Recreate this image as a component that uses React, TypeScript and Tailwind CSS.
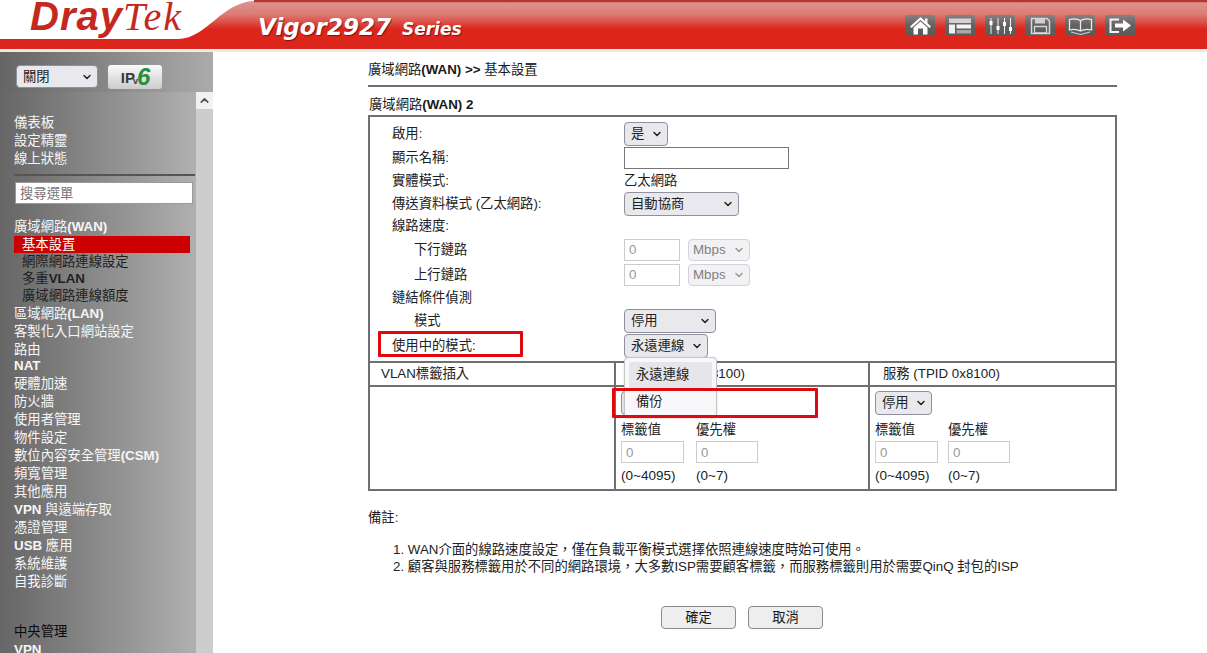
import { ChevronDown, ChevronUp } from 'lucide-react';

const topLinks = ['儀表板', '設定精靈', '線上狀態'];

const wanLinks = ['網際網路連線設定', '多重VLAN', '廣域網路連線額度'];

const menuLinks = [
  '區域網路(LAN)',
  '客製化入口網站設定',
  '路由',
  'NAT',
  '硬體加速',
  '防火牆',
  '使用者管理',
  '物件設定',
  '數位內容安全管理(CSM)',
  '頻寬管理',
  '其他應用',
  'VPN 與遠端存取',
  '憑證管理',
  'USB 應用',
  '系統維護',
  '自我診斷',
];

// the router UI only looks bold on its latin runs, the CJK stays regular
function Mixed({ text }: { text: string }) {
  return (
    <>
      {text.split(/([A-Za-z0-9()>]+)/).map((part, i) =>
        i % 2 === 1 ? (
          <b key={i} className="font-bold">
            {part}
          </b>
        ) : (
          <span key={i}>{part}</span>
        ),
      )}
    </>
  );
}

function Select({ label, box, disabled }: { label: string; box: string; disabled?: boolean }) {
  return (
    <div className={`relative ${box}`}>
      <select
        disabled={disabled}
        className={
          disabled
            ? 'h-full w-full appearance-none rounded-[4px] border border-[#d4d4d8] bg-[#f2f2f4] pl-[4px] text-[#808080]'
            : 'h-full w-full appearance-none rounded-[4px] border border-[#8f8f9d] bg-[#e9e9ed] pl-[6px] text-[#222]'
        }
      >
        <option>{label}</option>
      </select>
      <ChevronDown
        size={12}
        strokeWidth={3}
        className={
          disabled
            ? 'pointer-events-none absolute right-[5px] top-1/2 -translate-y-1/2 text-[#999]'
            : 'pointer-events-none absolute right-[5px] top-1/2 -translate-y-1/2 text-[#222]'
        }
      />
    </div>
  );
}

function Header() {
  return (
    <header className="relative h-[52px] w-full overflow-hidden bg-white">
      <svg className="absolute inset-0 h-full w-full" viewBox="0 0 1207 52" preserveAspectRatio="none">
        <defs>
          <linearGradient id="band" gradientUnits="userSpaceOnUse" x1="0" y1="0" x2="0" y2="52">
            <stop offset="0.04" stopColor="#dd9490" />
            <stop offset="0.27" stopColor="#dc7d76" />
            <stop offset="0.42" stopColor="#dc5047" />
            <stop offset="0.56" stopColor="#dc261c" />
            <stop offset="1" stopColor="#dc261c" />
          </linearGradient>
        </defs>
        <rect x="0" y="49" width="1207" height="3" fill="#ececec" />
        <path d="M0 39 L178 39 C206 39 222 2 254 1 L1207 1 L1207 49 L0 49 Z" fill="url(#band)" />
        <path d="M254 1 L1207 1" stroke="#b8342c" strokeWidth="2.5" fill="none" />
      </svg>
      <div className="relative flex items-start">
        <div className="ml-[30px] mt-[-8px] flex w-[228px] items-baseline text-[40px] leading-[48px] tracking-[1px] text-[#c4281e]">
          <span className="font-bold italic [font-family:'Liberation_Sans',sans-serif]">Dray</span>
          <span className="italic tracking-[2px] [font-family:'Liberation_Serif',serif]">Tek</span>
        </div>
        <div className="mt-[10px] flex items-baseline gap-[11px] font-bold italic text-white [font-family:'DejaVu_Sans',sans-serif] [text-shadow:1px_1px_1px_rgba(0,0,0,0.45)]">
          <span className="text-[23px] leading-[34px]">Vigor2927</span>
          <span className="text-[17px] leading-[34px]">Series</span>
        </div>
        <div className="ml-auto mr-[72px] mt-[15px] flex gap-[10px]">
          <IconButton>
            <path d="M15.5 2 L20 6 V3.5 H22.5 V8.2 L26 11.5 L24.5 13 L15.5 5 L6.5 13 L5 11.5 Z" fill="#fff" />
            <path d="M15.5 6.5 L22.5 12.5 V19.5 H18 V13.5 H13 V19.5 H8.5 V12.5 Z" fill="#fff" />
          </IconButton>
          <IconButton>
            <path d="M4 3.5 H26 V8 H4 Z" fill="#d2d2d2" />
            <path d="M4 9.5 H10 V18.5 H4 Z" fill="#f0f0f0" />
            <path d="M11.5 9.5 H26 V13.5 H11.5 Z" fill="#f4f4f4" />
            <path d="M11.5 15 H26 V18.5 H11.5 Z" fill="#a8a8a8" />
          </IconButton>
          <IconButton>
            <path d="M6 3 V19 M13 3 V19 M19.5 3 V19 M25.5 3 V19" stroke="#f2f2f2" strokeWidth="1" />
            <path d="M4.5 6 H7.5 V10 H4.5 Z M11.5 11 H14.5 V15 H11.5 Z M18 7 H21 V11 H18 Z M24 12 H27 V16 H24 Z" fill="#fff" />
          </IconButton>
          <IconButton>
            <path d="M6.5 3.5 H22 L24.5 6 V18.5 H6.5 Z" fill="none" stroke="#d8d8d8" strokeWidth="1.5" />
            <path d="M10 3.5 H20 V8.5 H10 Z" fill="#cfcfcf" />
            <path d="M9.5 11.5 H21.5 V18 H9.5 Z" fill="none" stroke="#d8d8d8" strokeWidth="1.3" />
          </IconButton>
          <IconButton>
            <path d="M15.5 5.5 C12 3.5 8 3.5 4.5 4.5 V15 C8 14 12 14 15.5 16 C19 14 23 14 26.5 15 V4.5 C23 3.5 19 3.5 15.5 5.5 Z M15.5 5.5 V16" fill="none" stroke="#ececec" strokeWidth="1.3" />
            <path d="M6 17 L15.5 19.5 L25 17" fill="none" stroke="#cfcfcf" strokeWidth="1.2" />
          </IconButton>
          <IconButton>
            <path d="M14 4.5 H5.5 V17 H14" fill="none" stroke="#f4f4f4" strokeWidth="2" />
            <path d="M10 8.5 H18 V4.5 L26 10.5 L18 16.5 V12.5 H10 Z" fill="#fff" />
          </IconButton>
        </div>
      </div>
    </header>
  );
}

function IconButton({ children }: { children: React.ReactNode }) {
  return (
    <div className="h-[21px] w-[30px] rounded-[2px] bg-gradient-to-b from-[#8a7f7f] via-[#626262] to-[#5a5a5a]">
      <svg viewBox="0 0 30 21" className="h-full w-full">
        {children}
      </svg>
    </div>
  );
}

function Sidebar() {
  return (
    <aside className="flex h-[601px] w-[213px] shrink-0 flex-col overflow-hidden text-[13.33px]">
      <div className="flex h-[40px] shrink-0 items-start gap-[10px] bg-gradient-to-r from-[#656565] to-[#ababab] pl-[16px] pt-[13px]">
        <Select label="關閉" box="h-[23px] w-[82px]" />
        <div className="flex h-[24px] w-[54px] items-center justify-center rounded-[3px] bg-gradient-to-b from-[#fafafa] to-[#cccccc] pl-[1px] text-[15px] leading-none text-[#3a3a3a]">
          <span className="font-bold">IP</span>
          <span className="ml-[-2px] mt-[9px] text-[9px] font-bold">v</span>
          <span className="ml-[-1px] mt-[-1px] text-[24px] font-bold italic text-[#23913c]">6</span>
        </div>
      </div>
      <div className="flex min-h-0 flex-1">
        <nav className="w-[196px] shrink-0 bg-gradient-to-r from-[#666666] to-[#b0b0b0] pt-[22px] leading-[18px] text-[#f6f6f6]">
          <div className="pl-[14px]">
            {topLinks.map((link) => (
              <div key={link}>{link}</div>
            ))}
          </div>
          <div className="ml-[14px] mt-[6px] h-[2px] w-[181px] bg-[#555555]" />
          <input
            placeholder="搜尋選單"
            className="ml-[15px] mt-[6px] block h-[22px] w-[178px] border border-[#999] bg-white px-[4px] placeholder:text-[#777]"
          />
          <div className="mt-[14px] pl-[14px]">
            <Mixed text="廣域網路(WAN)" />
          </div>
          <div className="ml-[14px] h-[17px] w-[176px] bg-[#cc0000] pl-[8px] leading-[17px] text-white">基本設置</div>
          <div className="pl-[22px] leading-[17px] text-[#1f1f1f]">
            {wanLinks.map((link) => (
              <div key={link}>
                <Mixed text={link} />
              </div>
            ))}
          </div>
          <div className="mt-[1px] pl-[14px]">
            {menuLinks.map((link) => (
              <div key={link} className={link === 'NAT' ? 'h-[16px] leading-[14px]' : 'h-[18px]'}>
                <Mixed text={link} />
              </div>
            ))}
          </div>
          <div className="mt-[32px] pl-[14px] text-[#0a0a0a]">中央管理</div>
          <div className="pl-[14px] font-bold">VPN</div>
        </nav>
        <div className="w-[17px] shrink-0 bg-[#cdcdcd]">
          <div className="flex h-[17px] items-center justify-center bg-[#f1f1f1]">
            <ChevronUp size={13} strokeWidth={3} className="text-[#505050]" />
          </div>
        </div>
      </div>
    </aside>
  );
}

function Row({ h, indent, label, children }: { h: string; indent?: boolean; label?: string; children?: React.ReactNode }) {
  return (
    <div className={`flex items-center ${h}`}>
      <div className={indent ? 'w-[254px] pl-[44px]' : 'w-[254px] pl-[22px]'}>{label}</div>
      {children}
    </div>
  );
}

function TagCell({ wide }: { wide?: boolean }) {
  return (
    <div className="flex h-[102px] flex-col pl-[5px] pt-[4px]">
      <Select label="停用" box="h-[24px] w-[57px]" />
      <div className={wide ? 'mt-[6px] flex h-[17px] items-center gap-[12px]' : 'mt-[6px] flex h-[17px] items-center gap-[10px]'}>
        <span className="w-[63px]">標籤值</span>
        <span>優先權</span>
      </div>
      <div className={wide ? 'mt-[3px] flex gap-[12px]' : 'mt-[3px] flex gap-[10px]'}>
        <input disabled defaultValue="0" className="h-[22px] w-[63px] border border-[#ccc] bg-white pl-[4px] text-[#999]" />
        <input disabled defaultValue="0" className="h-[22px] w-[62px] border border-[#ccc] bg-white pl-[4px] text-[#999]" />
      </div>
      <div className={wide ? 'mt-[4px] flex h-[17px] items-center gap-[12px]' : 'mt-[4px] flex h-[17px] items-center gap-[10px]'}>
        <span className="w-[63px] text-[13.5px]">(0~4095)</span>
        <span className="text-[13.5px]">(0~7)</span>
      </div>
    </div>
  );
}

function SpeedInputs() {
  return (
    <div className="flex items-center gap-[8px]">
      <input disabled defaultValue="0" className="h-[22px] w-[56px] border border-[#ccc] bg-white pl-[4px] text-[#999]" />
      <Select label="Mbps" box="h-[22px] w-[62px]" disabled />
    </div>
  );
}

function WanTable() {
  return (
    <div className="relative border-2 border-[#6f6f6f] leading-none text-[#222]">
      <div className="pb-[3px] pt-[4px]">
        <Row h="h-[25px]" label="啟用:">
          <Select label="是" box="h-[24px] w-[44px]" />
        </Row>
        <Row h="h-[24px]" label="顯示名稱:">
          <input className="h-[22px] w-[165px] border border-[#767676] bg-white" />
        </Row>
        <Row h="h-[22px]" label="實體模式:">
          乙太網路
        </Row>
        <Row h="h-[23px]" label="傳送資料模式 (乙太網路):">
          <Select label="自動協商" box="h-[24px] w-[115px]" />
        </Row>
        <Row h="h-[22px]" label="線路速度:" />
        <Row h="h-[25px]" indent label="下行鏈路">
          <SpeedInputs />
        </Row>
        <Row h="h-[25px]" indent label="上行鏈路">
          <SpeedInputs />
        </Row>
        <Row h="h-[21px]" label="鏈結條件偵測" />
        <Row h="h-[25px]" indent label="模式">
          <Select label="停用" box="h-[24px] w-[92px]" />
        </Row>
        <Row h="h-[25px]" label="使用中的模式:">
          <Select label="永遠連線" box="h-[24px] w-[84px]" />
        </Row>
      </div>

      <div className="grid grid-cols-[244px_254px_1fr] border-t-2 border-[#6f6f6f]">
        <div className="flex h-[22px] items-center pl-[11px]">VLAN標籤插入</div>
        <div className="flex h-[22px] items-center border-l-2 border-[#6f6f6f] pl-[12px]">顧客 (TPID 0x8100)</div>
        <div className="flex h-[22px] items-center border-l-2 border-[#6f6f6f] pl-[13px]">服務 (TPID 0x8100)</div>
      </div>
      <div className="grid grid-cols-[244px_254px_1fr] border-t-2 border-[#6f6f6f]">
        <div />
        <div className="border-l-2 border-[#6f6f6f]">
          <TagCell wide />
        </div>
        <div className="border-l-2 border-[#6f6f6f]">
          <TagCell />
        </div>
      </div>

      {/* open dropdown of 使用中的模式 */}
      <div className="absolute left-[254px] top-[240px] h-[61px] w-[93px] rounded-[4px] border border-[#c4c4c4] bg-[#f8f8fa] p-[4px] shadow-sm">
        <div className="flex h-[26px] items-center rounded-[2px] bg-[#e6e6ea] pl-[7px]">永遠連線</div>
        <div className="mt-[1px] flex h-[26px] items-center pl-[7px]">備份</div>
      </div>

      {/* red annotation boxes */}
      <div className="absolute left-[8px] top-[214px] h-[26px] w-[145px] rounded-[1px] border-[3px] border-[#e0090f]" />
      <div className="absolute left-[242px] top-[271px] h-[30px] w-[206px] rounded-[1px] border-[3px] border-[#e0090f]" />
    </div>
  );
}

function Main() {
  return (
    <main className="ml-[155px] w-[749px] shrink-0 text-[13.33px] text-[#1a1a1a]">
      <div className="flex h-[35px] items-end border-b-2 border-[#6f6f6f] pb-[6px] leading-[18px]">
        <span>
          <Mixed text="廣域網路(WAN) >> " />
          基本設置
        </span>
      </div>
      <div className="h-[28px] pl-[1px] pt-[9px] leading-[18px]">
        <Mixed text="廣域網路(WAN) 2" />
      </div>
      <WanTable />
      <div className="mt-[18px] leading-[18px]">備註:</div>
      <ol className="ml-[25px] mt-[14px] leading-[17px] text-[#222]">
        <li>1. WAN介面的線路速度設定，僅在負載平衡模式選擇依照連線速度時始可使用。</li>
        <li>2. 顧客與服務標籤用於不同的網路環境，大多數ISP需要顧客標籤，而服務標籤則用於需要QinQ 封包的ISP</li>
      </ol>
      <div className="mt-[31px] flex justify-center gap-[12px] pr-[1px]">
        <button className="h-[23px] w-[75px] rounded-[4px] border border-[#8a8a8a] bg-[#eeeeee]">確定</button>
        <button className="h-[23px] w-[75px] rounded-[4px] border border-[#8a8a8a] bg-[#eeeeee]">取消</button>
      </div>
    </main>
  );
}

export default function App() {
  return (
    <div className="h-[653px] w-[1207px] overflow-hidden bg-white [font-family:'Liberation_Sans','Noto_Sans_CJK_TC',sans-serif]">
      <Header />
      <div className="flex">
        <Sidebar />
        <Main />
      </div>
    </div>
  );
}
